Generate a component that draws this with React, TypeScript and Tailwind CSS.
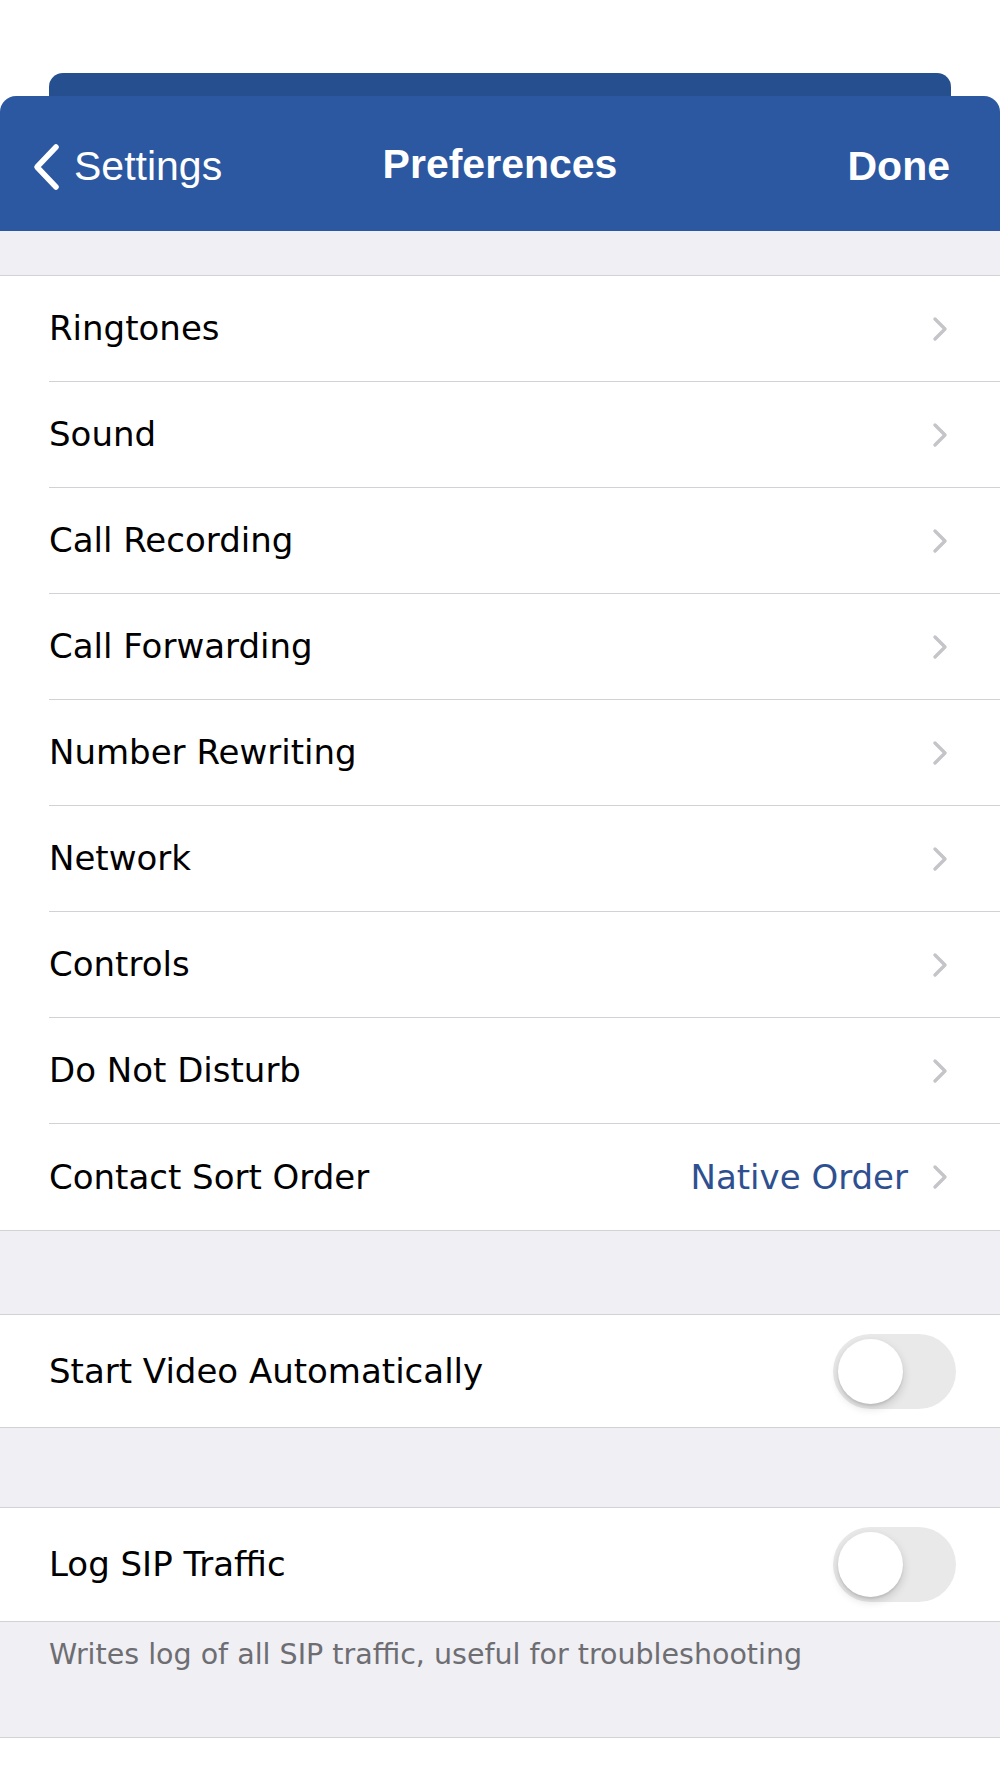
import React from 'react';

const navRows = [
  { label: 'Ringtones' },
  { label: 'Sound' },
  { label: 'Call Recording' },
  { label: 'Call Forwarding' },
  { label: 'Number Rewriting' },
  { label: 'Network' },
  { label: 'Controls' },
  { label: 'Do Not Disturb' },
  { label: 'Contact Sort Order', value: 'Native Order' },
];

const Chevron = () => (
  <svg width="16" height="26" viewBox="0 0 16 26" className="shrink-0">
    <polyline points="3,3 13,13 3,23" fill="none" stroke="#c4c4c9" strokeWidth="3.4" strokeLinecap="round" strokeLinejoin="round" />
  </svg>
);

const Toggle = () => (
  <div className="w-[123px] h-[75px] rounded-full bg-[#e9e9ea] p-[5px] shrink-0">
    <div className="w-[65px] h-[65px] rounded-full bg-white shadow-[0_4px_10px_rgba(0,0,0,0.16),0_2px_2px_rgba(0,0,0,0.08)]" />
  </div>
);

export default function App() {
  return (
    <div className="w-[1000px] h-[1778px] bg-white flex flex-col font-['DejaVu_Sans',sans-serif] overflow-hidden">
      {/* stacked sheet */}
      <div className="h-[73px] shrink-0" />
      <div className="mx-[49px] h-[23px] rounded-t-[14px] bg-[#264f8f] shrink-0" />
      <div className="h-[135px] rounded-t-[16px] bg-[#2c58a1] shrink-0 flex items-center relative font-['Liberation_Sans',Arial,sans-serif] text-white text-[41px] pt-[6px]">
        <div className="flex items-center pl-[32px] gap-[14px]">
          <svg width="28" height="48" viewBox="0 0 28 48">
            <polyline points="24,4 5,24 24,44" fill="none" stroke="white" strokeWidth="5.5" strokeLinecap="round" strokeLinejoin="round" />
          </svg>
          <span>Settings</span>
        </div>
        <div className="absolute left-0 right-0 text-center font-bold pointer-events-none -mt-[3px]">Preferences</div>
        <div className="ml-auto pr-[50px] font-bold">Done</div>
      </div>

      <div className="flex-1 bg-[#efeff4] flex flex-col">
        <div className="h-[44px]" />
        {/* navigation group */}
        <div className="bg-white border-y border-[#d1d1d6]">
          {navRows.map((r, i) => (
            <div key={r.label} className="pl-[49px]">
              <div className={`flex items-center h-[106px] pr-[52px] text-[34px] text-black ${i < navRows.length - 1 ? 'border-b border-[#d1d1d6]' : ''}`}>
                <span className="flex-1">{r.label}</span>
                {r.value && <span className="text-[#2f5090] mr-[24px]">{r.value}</span>}
                <Chevron />
              </div>
            </div>
          ))}
        </div>

        <div className="h-[83px]" />
        <div className="bg-white border-y border-[#d1d1d6] h-[114px] flex items-center pl-[49px] pr-[44px] text-[34px] text-black">
          <span className="flex-1">Start Video Automatically</span>
          <Toggle />
        </div>

        <div className="h-[79px]" />
        <div className="bg-white border-y border-[#d1d1d6] h-[115px] flex items-center pl-[49px] pr-[44px] text-[34px] text-black">
          <span className="flex-1">Log SIP Traffic</span>
          <Toggle />
        </div>
        <div className="h-[116px] pl-[49px] pt-[12px] text-[28.5px] text-[#6d6d72] border-b border-[#d1d1d6]">
          Writes log of all SIP traffic, useful for troubleshooting
        </div>
        <div className="flex-1 bg-white" />
      </div>
    </div>
  );
}
